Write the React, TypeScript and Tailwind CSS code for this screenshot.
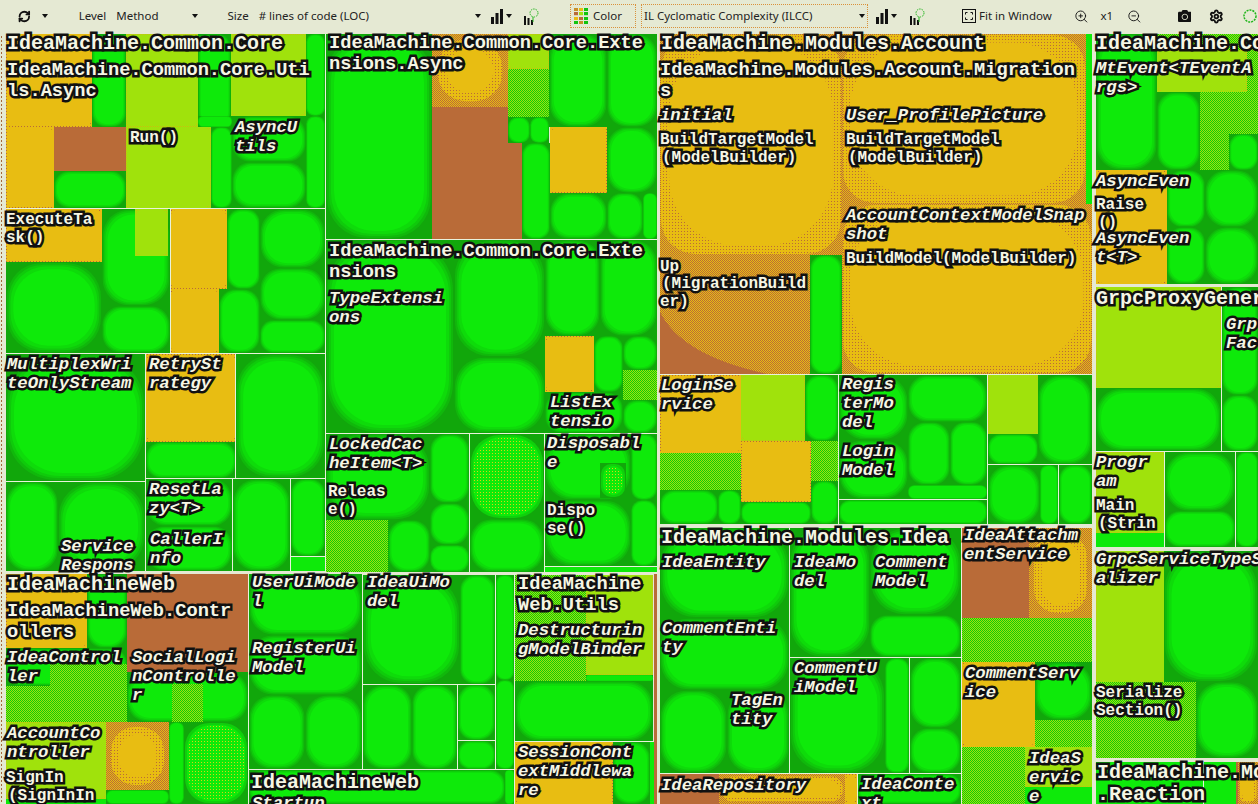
import { RefreshCw, Settings, ZoomIn, ZoomOut } from 'lucide-react';
import { FaCamera } from 'react-icons/fa';

type Cell = [number, number, number, number, string];
type Label = [string, number, number, string];

// treemap cells: x1, y1, x2, y2, kind
const cells: Cell[] = [
  // IdeaMachine.Common.Core.Utils.Async
  [6, 34, 92, 127, 'y'], [92, 34, 126, 127, 'g'], [126, 34, 198, 127, 'l'], [198, 34, 231, 127, 'g'],
  [231, 34, 306, 116, 'l'], [306, 34, 325, 116, 'g'], [232, 116, 306, 162, 'g'], [232, 162, 306, 208, 'g'],
  [306, 116, 325, 208, 'g'], [211, 127, 232, 208, 'g'], [198, 116, 232, 127, 'g'], [126, 127, 211, 208, 'l'],
  [6, 127, 54, 208, 'y'], [54, 127, 126, 171, 'b'], [54, 171, 126, 208, 'g'],
  [6, 209, 102, 262, 'y'], [6, 262, 102, 353, 'g'], [102, 209, 170, 306, 'g'], [135, 209, 168, 256, 'l'],
  [102, 306, 170, 353, 'g'], [170, 209, 227, 289, 'y'], [170, 289, 219, 353, 'y'], [227, 209, 260, 289, 'g'],
  [219, 289, 260, 353, 'g'], [260, 209, 325, 268, 'g'], [260, 268, 325, 320, 'g'], [260, 320, 325, 353, 'g'],
  [6, 354, 145, 481, 'g'], [146, 354, 236, 442, 'y'], [146, 442, 236, 478, 'g'], [236, 354, 325, 478, 'g'],
  [6, 482, 58, 571, 'g'], [58, 482, 145, 571, 'g'], [146, 479, 232, 526, 'g'], [146, 526, 232, 571, 'g'],
  [233, 479, 290, 571, 'g'], [291, 479, 325, 556, 'g'], [291, 557, 325, 571, 'f'],
  // IdeaMachine.Common.Core.Extensions.Async
  [326, 34, 432, 239, 'g'], [432, 107, 522, 239, 'b'], [508, 107, 522, 143, 'g'], [432, 34, 508, 107, 'o'],
  [508, 34, 549, 69, 'l'], [508, 69, 549, 117, 'd'], [508, 117, 530, 143, 'g'], [530, 117, 549, 143, 'g'],
  [549, 34, 607, 127, 'g'], [607, 34, 657, 127, 'g'], [522, 143, 550, 239, 'g'], [550, 127, 607, 193, 'y'],
  [607, 127, 657, 193, 'g'], [550, 193, 607, 239, 'g'], [607, 193, 643, 239, 'g'], [643, 193, 657, 239, 'g'],
  // Extensions
  [326, 240, 454, 433, 'g'], [454, 240, 545, 357, 'g'], [454, 357, 545, 433, 'g'], [545, 240, 600, 336, 'g'],
  [600, 240, 657, 336, 'g'], [594, 336, 623, 392, 'g'], [623, 336, 657, 370, 'g'], [545, 336, 594, 392, 'y'],
  [623, 370, 657, 400, 'd'], [623, 400, 657, 433, 'g'], [545, 392, 623, 433, 'g'],
  // LockedCacheItem, Disposable
  [326, 434, 430, 520, 'g'], [326, 520, 388, 572, 'd'], [388, 520, 430, 572, 'g'], [430, 434, 469, 503, 'g'],
  [430, 503, 469, 545, 'g'], [430, 545, 469, 572, 'g'], [470, 434, 544, 519, 'e'], [470, 519, 544, 572, 'g'],
  [545, 434, 631, 500, 'g'], [600, 463, 626, 498, 'e'], [545, 500, 631, 566, 'g'], [631, 434, 657, 500, 'g'],
  [631, 500, 657, 566, 'g'], [545, 567, 657, 572, 'f'],
  // IdeaMachineWeb.Controllers
  [6, 574, 87, 648, 'y'], [87, 574, 127, 648, 'g'], [127, 574, 248, 672, 'b'], [6, 648, 127, 686, 'g'],
  [50, 664, 127, 686, 'd'], [6, 686, 127, 722, 'd'], [127, 672, 248, 722, 'g'], [172, 684, 203, 722, 'd'],
  [6, 722, 106, 799, 'l'], [6, 799, 106, 804, 'f'], [106, 722, 169, 790, 'o'], [106, 790, 169, 804, 'g'],
  [169, 722, 184, 804, 'g'], [184, 722, 248, 804, 'e'],
  // UI models
  [249, 574, 362, 635, 'g'], [249, 635, 362, 695, 'g'], [249, 695, 305, 769, 'g'], [305, 695, 362, 769, 'g'],
  [363, 575, 460, 684, 'g'], [460, 575, 495, 684, 'g'], [363, 685, 412, 769, 'g'], [412, 685, 457, 769, 'g'],
  [458, 685, 495, 740, 'g'], [458, 741, 495, 769, 'g'], [496, 575, 514, 680, 'g'], [496, 680, 514, 769, 'g'],
  [249, 770, 505, 804, 'g'], [505, 770, 514, 804, 'g'],
  // IdeaMachineWeb.Utils
  [515, 575, 586, 681, 'd'], [586, 575, 653, 675, 'l'], [586, 675, 653, 681, 'g'], [515, 681, 653, 741, 'g'],
  [515, 742, 613, 804, 'y'], [613, 742, 650, 804, 'g'], [650, 742, 654, 804, 'f'], [654, 574, 657, 804, 'b'],
  // Account.Migrations
  [660, 34, 842, 255, 'y'], [660, 255, 810, 374, 'u'], [810, 255, 842, 374, 'g'], [842, 34, 1086, 204, 'y'],
  [1086, 34, 1092, 204, 'f'], [842, 204, 1092, 374, 'y'],
  // LoginService
  [660, 375, 741, 453, 'y'], [741, 375, 805, 441, 'l'], [805, 375, 838, 441, 'g'], [660, 453, 741, 490, 'd'],
  [660, 490, 718, 524, 'g'], [718, 490, 741, 524, 'g'], [741, 441, 811, 502, 'y'], [811, 441, 838, 481, 'd'],
  [811, 481, 838, 524, 'g'], [741, 502, 811, 524, 'g'],
  // RegisterModel, LoginModel
  [839, 375, 908, 440, 'g'], [908, 375, 987, 422, 'g'], [839, 440, 908, 499, 'g'], [908, 422, 950, 485, 'g'],
  [950, 422, 987, 485, 'g'], [908, 485, 987, 499, 'g'], [839, 500, 987, 524, 'g'],
  [988, 375, 1038, 434, 'l'], [988, 434, 1038, 464, 'g'], [1038, 375, 1092, 464, 'g'], [988, 465, 1040, 524, 'g'],
  [1040, 465, 1058, 524, 'g'], [1059, 465, 1092, 524, 'g'],
  // IdeaMachine.Modules.Idea
  [660, 528, 789, 618, 'g'], [660, 618, 789, 690, 'g'], [660, 690, 727, 773, 'g'], [727, 690, 789, 773, 'g'],
  [790, 528, 870, 657, 'g'], [870, 528, 961, 615, 'g'], [870, 615, 961, 657, 'g'], [790, 658, 885, 773, 'g'],
  [885, 658, 909, 773, 'g'], [910, 658, 961, 728, 'g'], [910, 728, 961, 773, 'g'],
  [962, 528, 1029, 618, 'b'], [1029, 528, 1092, 618, 'o'], [962, 618, 1092, 662, 'd'], [962, 662, 1035, 747, 'y'],
  [1035, 662, 1092, 720, 'g'], [1035, 720, 1092, 747, 'd'], [962, 747, 1025, 804, 'd'], [1025, 747, 1092, 787, 'l'],
  [1025, 787, 1092, 804, 'f'], [660, 774, 719, 804, 'b'], [719, 774, 845, 804, 'o'], [845, 774, 857, 804, 'y'],
  [858, 774, 961, 804, 'g'],
  // right column
  [1096, 34, 1157, 170, 'g'], [1157, 34, 1258, 50, 'd'], [1157, 50, 1247, 92, 'l'], [1247, 50, 1258, 92, 'd'],
  [1157, 92, 1200, 170, 'g'], [1200, 92, 1229, 170, 'd'], [1229, 92, 1258, 170, 'd'], [1229, 134, 1258, 170, 'g'],
  [1096, 170, 1167, 284, 'y'], [1167, 170, 1205, 227, 'g'], [1167, 227, 1205, 284, 'g'], [1205, 170, 1258, 227, 'g'],
  [1205, 227, 1258, 284, 'g'],
  [1096, 287, 1221, 388, 'l'], [1096, 388, 1221, 451, 'g'], [1222, 287, 1258, 395, 'g'], [1222, 395, 1258, 451, 'g'],
  [1096, 452, 1164, 533, 'l'], [1096, 533, 1164, 547, 'f'], [1165, 452, 1235, 511, 'g'], [1165, 511, 1235, 547, 'g'],
  [1236, 452, 1258, 547, 'g'],
  [1096, 551, 1164, 682, 'l'], [1164, 551, 1258, 682, 'g'], [1096, 682, 1196, 758, 'd'], [1196, 682, 1258, 758, 'g'],
  [1096, 762, 1203, 804, 'f'], [1204, 762, 1236, 804, 'f'], [1236, 762, 1238, 804, 'b'], [1238, 762, 1258, 804, 'o'],
];

// white separators: x, y, w, h
const lines: number[][] = [
  [6, 208, 319, 1], [170, 209, 1, 144], [6, 353, 319, 1], [145, 354, 1, 217], [146, 478, 179, 1], [235, 354, 1, 124],
  [6, 481, 139, 1], [232, 479, 1, 92], [290, 479, 1, 92], [291, 556, 34, 1], [325, 34, 1, 538],
  [326, 239, 331, 1], [326, 433, 331, 1], [469, 434, 1, 138], [544, 434, 1, 138], [545, 566, 112, 1],
  [248, 574, 1, 230], [362, 574, 1, 195], [363, 684, 132, 1], [495, 574, 1, 195], [457, 685, 1, 84], [458, 740, 37, 1],
  [249, 769, 265, 1], [514, 574, 1, 230], [515, 741, 139, 1],
  [660, 374, 432, 1], [838, 375, 1, 149], [839, 499, 148, 1], [987, 375, 1, 149], [988, 464, 104, 1], [1058, 465, 1, 59],
  [789, 528, 1, 245], [790, 657, 171, 1], [909, 658, 1, 115], [660, 773, 301, 1], [961, 528, 1, 276], [857, 774, 1, 30],
  [1221, 287, 1, 164], [1096, 451, 162, 1], [1164, 452, 1, 95], [1235, 452, 1, 95], [1203, 762, 1, 42],
];

const labels: Label[] = [
  ['a', 7, 42, 'IdeaMachine.Common.Core'], ['a', 661, 42, 'IdeaMachine.Modules.Account'], ['a', 1096, 42, 'IdeaMachine.Co'],
  ['a', 7, 583, 'IdeaMachineWeb'], ['a', 661, 536, 'IdeaMachine.Modules.Idea'], ['a', 1096, 297, 'GrpcProxyGener'],
  ['a', 1097, 771, 'IdeaMachine.Mo\n.Reaction'], ['a', 251, 781, 'IdeaMachineWeb'],
  ['n', 7, 69, 'IdeaMachine.Common.Core.Uti\nls.Async'], ['n', 329, 42, 'IdeaMachine.Common.Core.Exte\nnsions.Async'],
  ['n', 329, 250, 'IdeaMachine.Common.Core.Exte\nnsions'], ['n', 660, 69, 'IdeaMachine.Modules.Account.Migration\ns'],
  ['n', 7, 610, 'IdeaMachineWeb.Contr\nollers'], ['n', 518, 583, 'IdeaMachine\nWeb.Utils'],
  ['t', 235, 127, 'AsyncU\ntils'], ['t', 7, 364, 'MultiplexWri\nteOnlyStream'], ['t', 149, 364, 'RetrySt\nrategy'],
  ['t', 149, 489, 'ResetLa\nzy<T>'], ['t', 150, 539, 'CallerI\nnfo'], ['t', 61, 546, 'Service\nRespons'],
  ['t', 329, 298, 'TypeExtensi\nons'], ['t', 550, 402, 'ListEx\ntensio'], ['t', 329, 444, 'LockedCac\nheItem<T>'],
  ['t', 547, 443, 'Disposabl\ne'], ['t', 252, 582, 'UserUiMode\nl'], ['t', 252, 648, 'RegisterUi\nModel'],
  ['t', 367, 582, 'IdeaUiMo\ndel'], ['t', 518, 630, 'Destructurin\ngModelBinder'], ['t', 518, 752, 'SessionCont\nextMiddlewa\nre'],
  ['t', 7, 657, 'IdeaControl\nler'], ['t', 132, 657, 'SocialLogi\nnControlle\nr'], ['t', 7, 733, 'AccountCo\nntroller'],
  ['t', 660, 115, 'initial'], ['t', 846, 115, 'User_ProfilePicture'], ['t', 846, 215, 'AccountContextModelSnap\nshot'],
  ['t', 661, 385, 'LoginSe\nrvice'], ['t', 842, 384, 'Regis\nterMo\ndel'], ['t', 842, 451, 'Login\nModel'],
  ['t', 662, 562, 'IdeaEntity'], ['t', 662, 628, 'CommentEnti\nty'], ['t', 731, 700, 'TagEn\ntity'], ['t', 794, 562, 'IdeaMo\ndel'],
  ['t', 875, 562, 'Comment\nModel'], ['t', 794, 668, 'CommentU\niModel'], ['t', 964, 535, 'IdeaAttachm\nentService'],
  ['t', 965, 673, 'CommentServ\nice'], ['t', 1029, 758, 'IdeaS\nervic\ne'], ['t', 661, 785, 'IdeaRepository'],
  ['t', 861, 784, 'IdeaConte\nxt'], ['t', 1096, 68, 'MtEvent<TEventA\nrgs>'], ['t', 1096, 181, 'AsyncEven'],
  ['t', 1096, 238, 'AsyncEven\nt<T>'], ['t', 1226, 324, 'Grp\nFac'], ['t', 1096, 462, 'Progr\nam'],
  ['t', 1096, 559, 'GrpcServiceTypeS\nalizer'], ['t', 252, 803, 'Startup'],
  ['m', 130, 137, 'Run()'], ['m', 6, 219, 'ExecuteTa\nsk()'], ['m', 328, 491, 'Releas\ne()'], ['m', 547, 510, 'Dispo\nse()'],
  ['m', 6, 777, 'SignIn'], ['m', 8, 795, '(SignInIn'], ['m', 660, 139, 'BuildTargetModel'], ['m', 662, 157, '(ModelBuilder)'],
  ['m', 846, 139, 'BuildTargetModel'], ['m', 848, 157, '(ModelBuilder)'],
  ['m', 846, 258, 'BuildModel(ModelBuilder)'], ['m', 660, 266, 'Up'], ['m', 662, 283, '(MigrationBuild'], ['m', 660, 301, 'er)'],
  ['m', 1096, 204, 'Raise'], ['m', 1098, 222, '()'],
  ['m', 1096, 692, 'Serialize\nSection()'], ['m', 1096, 505, 'Main'], ['m', 1098, 523, '(Strin'],
];

const labelStyles: Record<string, { cls: string; lh: number; dy: number }> = {
  a: { cls: 'text-[20px] leading-[22px]', lh: 22, dy: 2 },
  n: { cls: 'text-[18.7px] leading-[21px]', lh: 21, dy: 1 },
  t: { cls: 'text-[17.3px] leading-[19px] italic', lh: 19, dy: 0 },
  m: { cls: 'text-[16px] leading-[18px]', lh: 18, dy: 1 },
};

const CellShape = ({ cell }: { cell: Cell }) => {
  const [x1, y1, x2, y2, kind] = cell;
  const w = x2 - x1;
  const h = y2 - y1;
  const min = Math.min(w, h);
  const inset = (n: number) => ({ x: x1 + n, y: y1 + n, width: Math.max(w - n * 2, 0), height: Math.max(h - n * 2, 0) });
  const rx = min * 0.38;

  if (kind === 'b') return <rect x={x1} y={y1} width={w} height={h} fill="#b96b38" />;
  if (kind === 'f') return <rect x={x1} y={y1} width={w} height={h} fill="#0eea0a" />;
  if (kind === 'e') {
    return (
      <g>
        <rect x={x1} y={y1} width={w} height={h} fill="#11a70b" />
        <rect {...inset(1)} rx={rx} fill="#0fd00b" />
        <rect {...inset(3)} rx={rx} fill="#0eea0a" />
        <rect {...inset(4)} rx={rx} fill="url(#sparse)" />
      </g>
    );
  }
  if (kind === 'd') return <rect x={x1} y={y1} width={w} height={h} fill="url(#greenLime)" />;
  if (kind === 'y') {
    // small cells are nearly flat, big ones fade through a dither band
    if (min < 100) {
      return (
        <g>
          <rect x={x1} y={y1} width={w} height={h} fill="url(#sparseBrown)" />
          <rect {...inset(1)} rx={5} fill="#e8bd12" />
        </g>
      );
    }
    return (
      <g>
        <rect x={x1} y={y1} width={w} height={h} fill="url(#brownYellow)" />
        <rect {...inset(1)} rx={rx * 0.5} fill="url(#sparseBrown)" />
        <rect {...inset(min * 0.05)} rx={rx} fill="#e8bd12" />
      </g>
    );
  }
  if (kind === 'o') {
    return (
      <g>
        <rect x={x1} y={y1} width={w} height={h} fill="url(#brownYellow)" />
        <rect {...inset(min * 0.08)} rx={rx} fill="url(#sparseBrown)" />
        <rect {...inset(min * 0.2)} rx={rx * 0.8} fill="#e8bd12" />
      </g>
    );
  }
  if (kind === 'u') {
    return (
      <g>
        <rect x={x1} y={y1} width={w} height={h} fill="url(#brownYellow)" />
        <path d={`M${x1} ${y2} V${y2 - 62} Q${x1 + 22} ${y2 - 18} ${x1 + 108} ${y2} Z`} fill="#b96b38" />
      </g>
    );
  }
  if (kind === 'l') {
    return (
      <g>
        <rect x={x1} y={y1} width={w} height={h} fill="url(#limeYellow)" />
        <rect {...inset(1)} rx={5} fill="#a0e20c" />
      </g>
    );
  }
  return (
    <g>
      <rect x={x1} y={y1} width={w} height={h} fill="#11a70b" />
      <rect {...inset(Math.min(min * 0.01, 1))} rx={rx} fill="#10b80b" />
      <rect {...inset(Math.min(min * 0.03, 3))} rx={rx} fill="#0fca0b" />
      <rect {...inset(Math.min(min * 0.05, 5))} rx={rx} fill="#0edb0a" />
      <rect {...inset(Math.min(min * 0.08, 8))} rx={rx} fill="#0eea0a" />
    </g>
  );
};

const TreemapChart = () => (
  <svg width={1258} height={804} viewBox="0 0 1258 804" className="absolute left-0 top-0">
    <defs>
      <pattern id="brownYellow" width="2" height="2" patternUnits="userSpaceOnUse">
        <rect width="2" height="2" fill="#e8bd12" />
        <rect width="1" height="1" fill="#b96b38" />
        <rect x="1" y="1" width="1" height="1" fill="#b96b38" />
      </pattern>
      <pattern id="greenLime" width="2" height="2" patternUnits="userSpaceOnUse">
        <rect width="2" height="2" fill="#a0e20c" />
        <rect width="1" height="1" fill="#0ecb0a" />
        <rect x="1" y="1" width="1" height="1" fill="#0ecb0a" />
      </pattern>
      <pattern id="limeYellow" width="2" height="2" patternUnits="userSpaceOnUse">
        <rect width="2" height="2" fill="#a0e20c" />
        <rect width="1" height="1" fill="#c8c010" />
      </pattern>
      <pattern id="sparse" width="3" height="3" patternUnits="userSpaceOnUse">
        <rect width="1" height="1" fill="#d8d410" />
      </pattern>
      <pattern id="sparseBrown" width="3" height="3" patternUnits="userSpaceOnUse">
        <rect width="3" height="3" fill="#e8bd12" />
        <rect width="1" height="1" fill="#b96b38" />
      </pattern>
      <pattern id="edgeDots" width="1" height="4" patternUnits="userSpaceOnUse">
        <rect width="1" height="2" fill="#a5683a" />
      </pattern>
    </defs>
    <rect x="1" y="34" width="1" height="770" fill="url(#edgeDots)" />
    {cells.map((c, i) => (
      <CellShape key={i} cell={c} />
    ))}
    {lines.map((l, i) => (
      <rect key={i} x={l[0]} y={l[1]} width={l[2]} height={l[3]} fill="#e9f2dc" />
    ))}
  </svg>
);

const Caret = () => <span className="inline-block h-0 w-0 border-x-[3.5px] border-t-[4px] border-x-transparent border-t-[#111]" />;

const BarsIcon = () => (
  <svg width="12" height="15" viewBox="0 0 12 15">
    <rect x="0" y="8" width="3" height="7" fill="#111" />
    <rect x="4.5" y="4" width="3" height="11" fill="#111" />
    <rect x="9" y="0" width="3" height="15" fill="#111" />
  </svg>
);

const TreeBarsIcon = () => (
  <svg width="15" height="17" viewBox="0 0 15 17">
    <rect x="0" y="8" width="2" height="9" fill="#111" />
    <rect x="3.5" y="10" width="2" height="7" fill="#111" />
    <rect x="7" y="12" width="2" height="5" fill="#111" />
    <circle cx="10" cy="5" r="4" fill="none" stroke="#1fb51a" strokeWidth="1" strokeDasharray="1.5 1" />
    <path d="M9 9 L9 14" stroke="#1fb51a" strokeWidth="1" />
  </svg>
);

const ColorGridIcon = () => {
  const colors = ['#c8902a', '#e8bd12', '#12c40f', '#b96b38', '#a0e20c', '#12c40f', '#e8bd12', '#b96b38', '#12c40f', '#12c40f', '#c8902a', '#12c40f'];
  return (
    <div className="grid grid-cols-3 gap-px">
      {colors.map((c, i) => (
        <svg key={i} width="4" height="3.2">
          <rect width="4" height="3.2" fill={c} />
        </svg>
      ))}
    </div>
  );
};

const FitIcon = () => (
  <svg width="14" height="14" viewBox="0 0 14 14" fill="none" stroke="#111">
    <rect x="0.5" y="0.5" width="13" height="13" />
    <path d="M3.5 5.5 V3.5 H5.5 M8.5 3.5 H10.5 V5.5 M10.5 8.5 V10.5 H8.5 M5.5 10.5 H3.5 V8.5" />
  </svg>
);

const CycleIcon = () => (
  <svg width="16" height="16" viewBox="0 0 16 16" fill="none" stroke="#1fb51a" strokeWidth="1.5" strokeDasharray="2 1">
    <circle cx="8" cy="8" r="6" />
  </svg>
);

const Toolbar = () => (
  <div className="flex h-[32px] items-center bg-[#e5e9d3] font-['Noto_Sans',sans-serif] text-[11.5px] text-[#222] whitespace-nowrap">
    <RefreshCw className="ml-[18px] h-[13px] w-[13px] text-[#111]" strokeWidth={3.5} />
    <div className="ml-[11px] flex"><Caret /></div>
    <span className="ml-[31px]">Level</span>
    <span className="ml-[10px]">Method</span>
    <div className="ml-[34px] flex"><Caret /></div>
    <span className="ml-[29px]">Size</span>
    <span className="ml-[10px]"># lines of code (LOC)</span>
    <div className="ml-[106px] flex"><Caret /></div>
    <div className="ml-[10px]"><BarsIcon /></div>
    <div className="ml-[3px] flex"><Caret /></div>
    <div className="ml-[12px]"><TreeBarsIcon /></div>
    <div className="ml-[31px] flex h-[24px] w-[66px] shrink-0 items-center gap-[5px] border border-dotted border-[#d9913a] pl-[3px]">
      <ColorGridIcon />
      <span>Color</span>
    </div>
    <div className="ml-[5px] flex h-[24px] w-[227px] shrink-0 items-center justify-between border border-dotted border-[#d9913a] pl-[2px] pr-[2px]">
      <span>IL Cyclomatic Complexity (ILCC)</span>
      <Caret />
    </div>
    <div className="ml-[8px]"><BarsIcon /></div>
    <div className="ml-[3px] flex"><Caret /></div>
    <div className="ml-[13px]"><TreeBarsIcon /></div>
    <div className="ml-[37px]"><FitIcon /></div>
    <span className="ml-[3px]">Fit in Window</span>
    <ZoomIn className="ml-[22px] h-[15px] w-[15px] text-[#111]" strokeWidth={1.5} />
    <span className="ml-[12px]">x1</span>
    <ZoomOut className="ml-[14px] h-[15px] w-[15px] text-[#111]" strokeWidth={1.5} />
    <FaCamera className="ml-[36px] h-[14px] w-[14px] text-[#111]" />
    <Settings className="ml-[18px] h-[15px] w-[15px] text-[#111]" strokeWidth={3} />
    <div className="ml-[18px]"><CycleIcon /></div>
  </div>
);

export default function App() {
  return (
    <div className="relative h-[804px] w-[1258px] overflow-hidden bg-[#e5e9d3]">
      <div className="absolute left-0 top-0 w-full"><Toolbar /></div>
      <TreemapChart />
      {labels.map(([kind, x, y, text], i) => {
        const st = labelStyles[kind];
        return (
          <div
            key={i}
            style={{ left: x, top: y + st.dy - st.lh / 2 }}
            className={`absolute whitespace-pre font-['Liberation_Mono',monospace] font-bold text-[#f6f6e4] [-webkit-text-stroke:5px_#111] [paint-order:stroke_fill] ${st.cls}`}
          >
            {text}
          </div>
        );
      })}
    </div>
  );
}
